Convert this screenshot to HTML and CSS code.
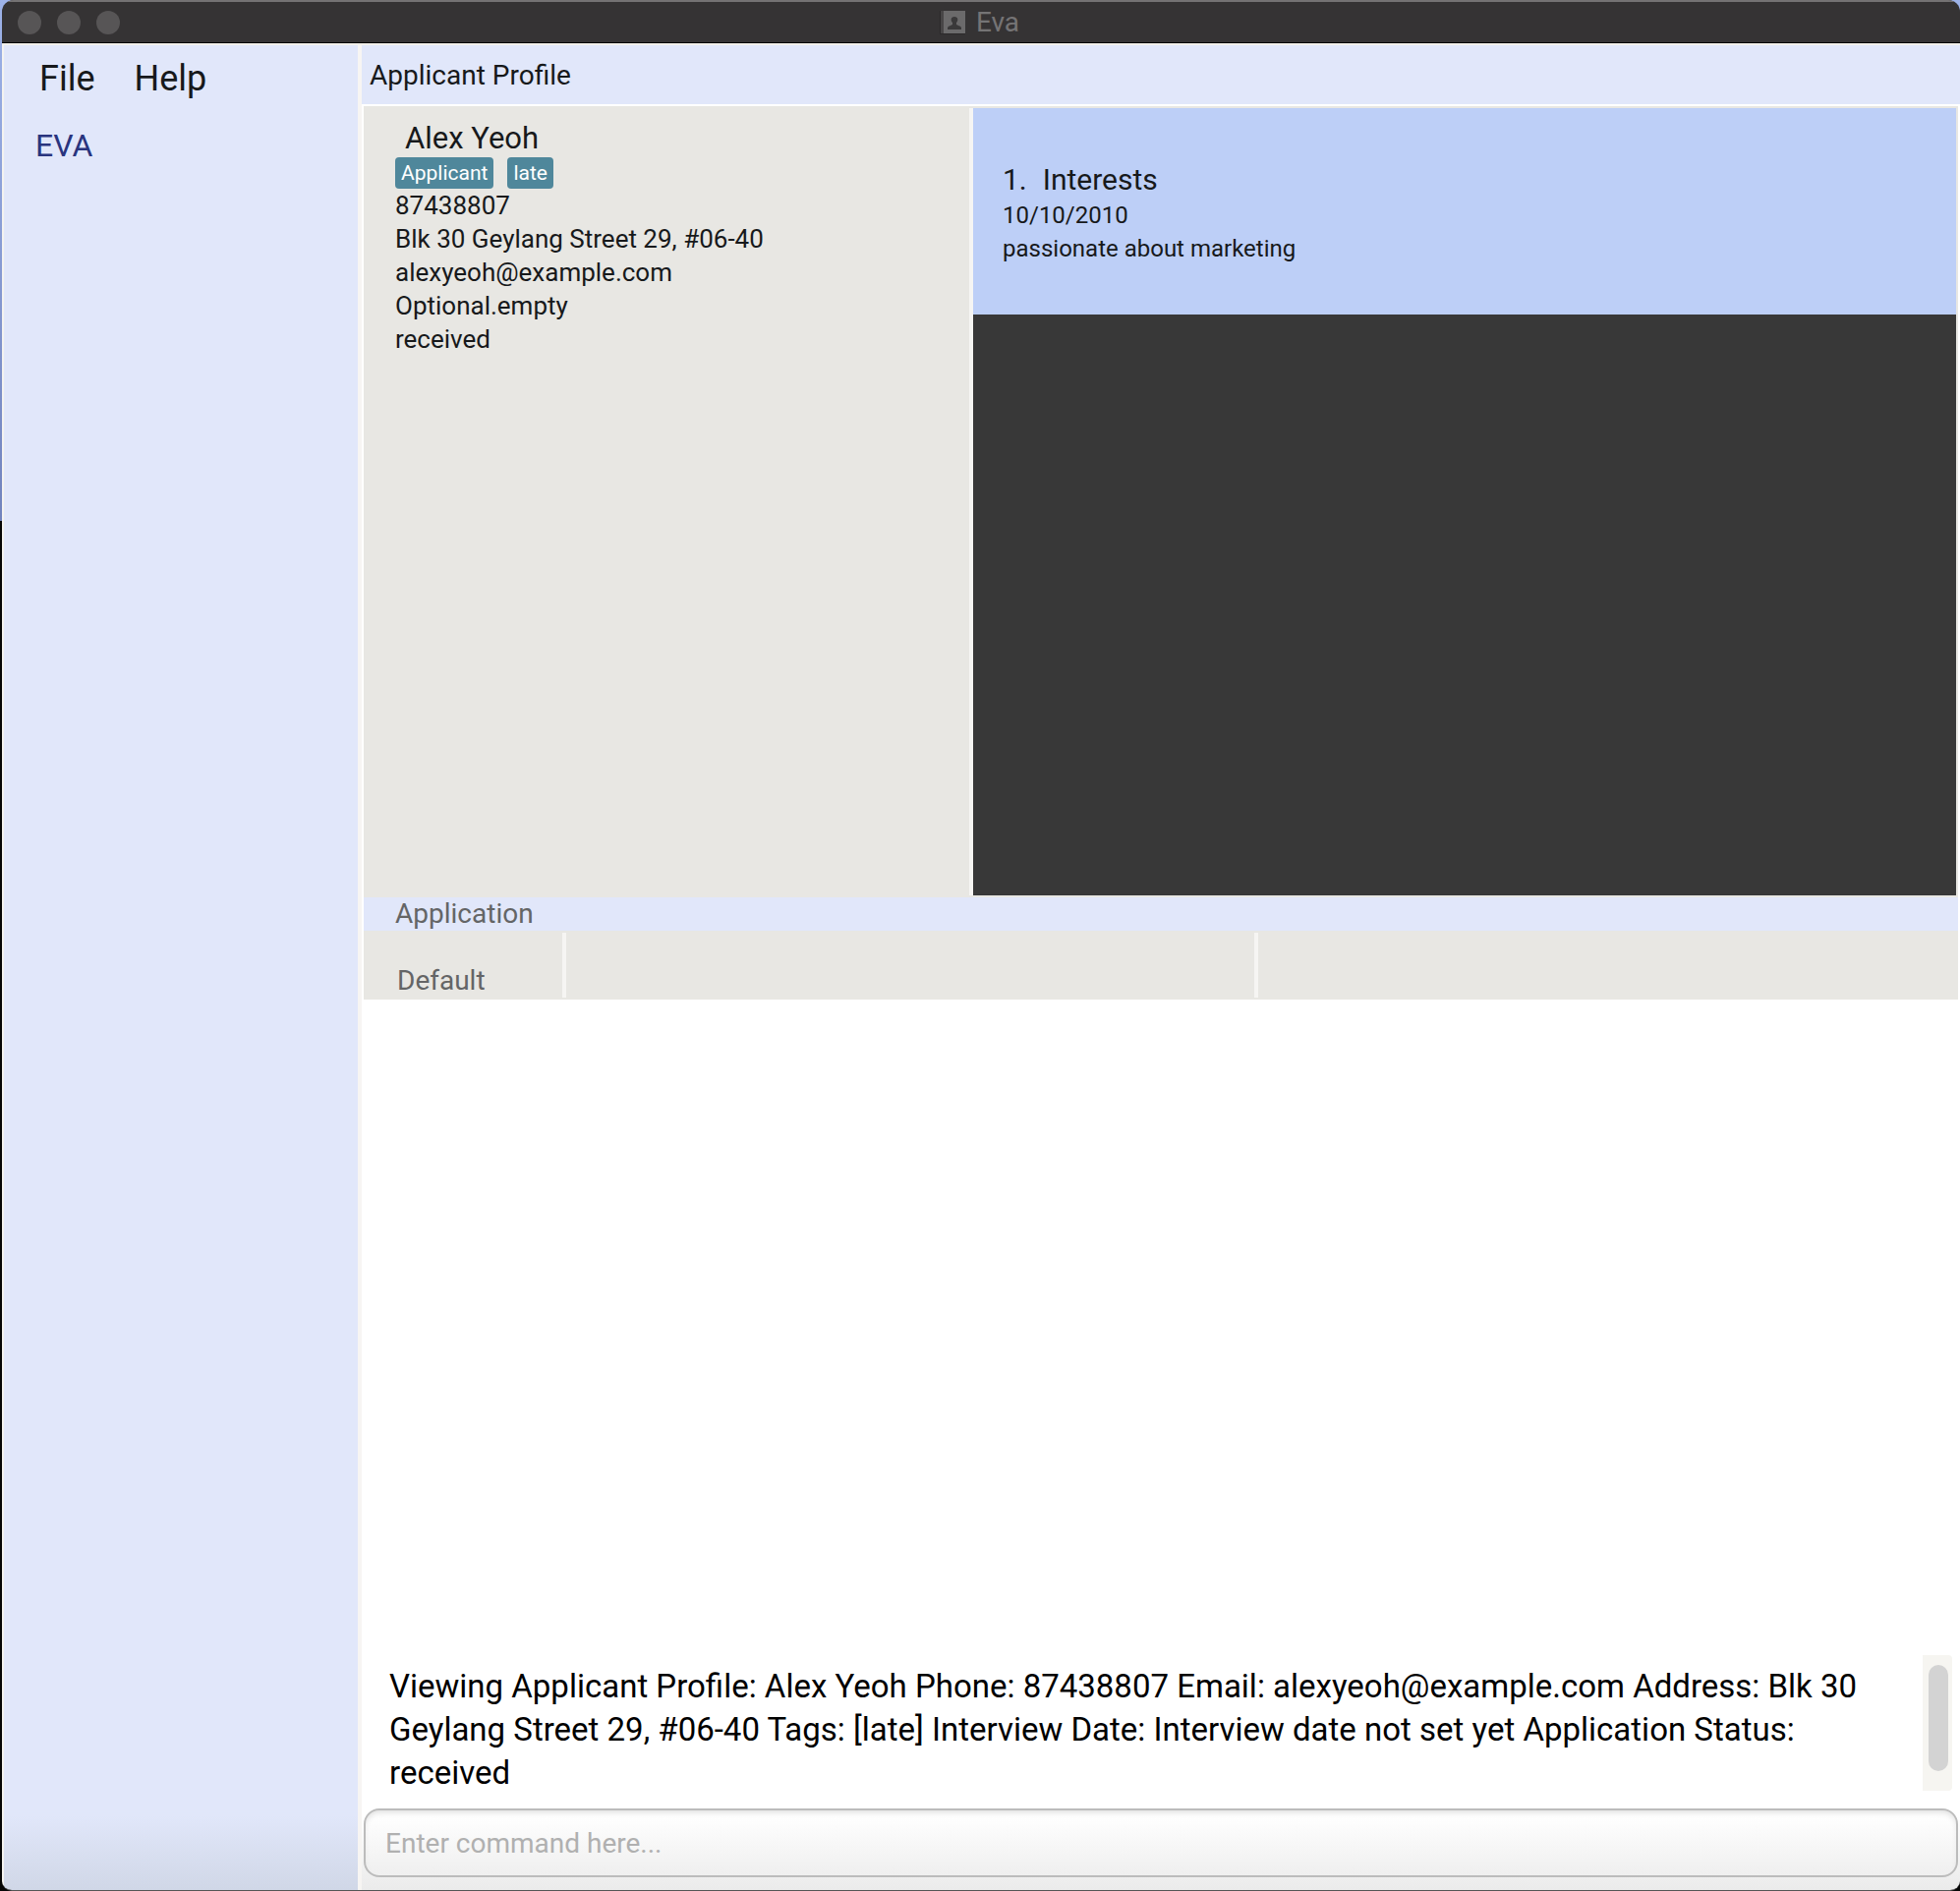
FILE: index.html
```html
<!DOCTYPE html>
<html lang="en">
<head>
<meta charset="utf-8">
<title>Eva</title>
<link rel="stylesheet" href="styles.css">
</head>
<body>
<div class="window">
  <header class="titlebar">
    <div class="lights"><span class="light"></span><span class="light"></span><span class="light"></span></div>
    <div class="window-title">
      <svg class="app-icon" width="28" height="26" viewBox="0 0 28 26" aria-hidden="true">
        <rect x="1" y="1" width="26" height="24" fill="#2b292a"/>
        <rect x="2" y="1" width="3" height="23" fill="#484647"/>
        <rect x="5" y="1" width="22" height="23" fill="#6b6a6b"/>
        <path d="M9 20v-2c1-2 4-2 5-3v-2c-2-2-2-6 2-6s4 4 2 6v2c1 1 4 1 5 3v2z" fill="#3a393a"/>
      </svg>
      <span>Eva</span>
    </div>
  </header>
  <div class="body">
    <aside class="sidebar">
      <nav class="menu">
        <button class="menu-item" type="button">File</button>
        <button class="menu-item" type="button">Help</button>
      </nav>
      <p class="brand">EVA</p>
    </aside>
    <main class="main">
      <h1 class="panel-title">Applicant Profile</h1>
      <div class="content">
        <section class="split">
          <div class="profile">
            <h2 class="name">Alex Yeoh</h2>
            <div class="tags"><span class="tag">Applicant</span><span class="tag">late</span></div>
            <p class="line">87438807</p>
            <p class="line">Blk 30 Geylang Street 29, #06-40</p>
            <p class="line">alexyeoh@example.com</p>
            <p class="line">Optional.empty</p>
            <p class="line">received</p>
          </div>
          <div class="comments">
            <article class="comment">
              <h3 class="comment-title"><span>1.</span><span>Interests</span></h3>
              <p class="line">10/10/2010</p>
              <p class="line">passionate about marketing</p>
            </article>
          </div>
        </section>
        <h2 class="application-title">Application</h2>
        <div class="application-row">
          <div class="cell cell-first">Default</div>
          <div class="cell"></div>
          <div class="cell"></div>
        </div>
        <div class="blank"></div>
        <div class="result">
          <textarea class="result-text" rows="3" readonly aria-label="Result">Viewing Applicant Profile: Alex Yeoh Phone: 87438807 Email: alexyeoh@example.com Address: Blk 30 Geylang Street 29, #06-40 Tags: [late] Interview Date: Interview date not set yet Application Status: received</textarea>
          <div class="scroll-track"><div class="scroll-thumb"></div></div>
        </div>
        <input class="command" type="text" placeholder="Enter command here..." aria-label="Command">
      </div>
    </main>
  </div>
</div>
</body>
</html>
```
FILE: styles.css
```css
* {
  box-sizing: border-box;
  margin: 0;
}

body {
  background: linear-gradient(#9db2e8 0, #7183bd 530px, #060606 530px, #060606 100%);
  color: #17191b;
  font-family: Roboto, "Liberation Sans", sans-serif;
  font-size: 26px;
  line-height: 34px;
}

h1, h2, h3 {
  font-weight: 400;
}

.window {
  display: flex;
  flex-direction: column;
  min-height: 100vh;
  margin-left: 2px;
  border-bottom: 1px solid #555;
  border-radius: 12px 12px 10px 10px;
  overflow: hidden;
}

.titlebar {
  display: grid;
  grid-template-columns: 1fr auto 1fr;
  align-items: center;
  height: 44px;
  padding: 0 16px;
  background: #353334;
  border-top: 2px solid #747273;
  border-bottom: 1px solid #000;
}

.lights {
  display: flex;
  gap: 16px;
}

.light {
  width: 24px;
  height: 24px;
  border-radius: 50%;
  background: #575556;
}

.window-title {
  display: flex;
  align-items: center;
  gap: 10px;
  padding-right: 4px;
  color: #757475;
  font-size: 28px;
}

.body {
  display: flex;
  flex: 1;
  border-top: 2px solid #f2f0ea;
}

.sidebar {
  width: 366px;
  flex: none;
  padding: 10px 32px;
  background: linear-gradient(#e1e7fa calc(100% - 76px), #d0d7e7 100%);
  border-left: 2px solid #f4f3f0;
  border-right: 4px solid #f7f5f3;
}

.menu {
  display: flex;
  gap: 40px;
  padding-left: 4px;
}

.menu-item {
  padding: 0;
  border: 0;
  background: none;
  color: inherit;
  font: inherit;
  font-size: 36px;
  line-height: 48px;
}

.brand {
  margin-top: 24px;
  color: #29347e;
  font-size: 32px;
  line-height: 40px;
}

.main {
  display: flex;
  flex: 1;
  flex-direction: column;
  min-width: 0;
  background: linear-gradient(#fff calc(100% - 76px), #ebebeb 100%);
}

.panel-title {
  height: 62px;
  padding: 0 8px;
  background: #e1e7fa;
  border-bottom: 2px solid #fff;
  font-size: 28px;
  line-height: 62px;
}

.content {
  display: flex;
  flex: 1;
  flex-direction: column;
  padding: 0 2px 13px;
}

.split {
  display: grid;
  grid-template-columns: 620fr 1000fr;
  flex: 802 0 0;
  padding: 2px 2px 2px 0;
  background: #e8e7e3;
}

.profile {
  padding: 12px 32px;
  border-right: 4px solid #f6f5f3;
}

.name {
  padding-left: 10px;
  font-size: 31px;
  line-height: 38px;
}

.tags {
  display: flex;
  gap: 14px;
}

.tag {
  padding: 0 6px;
  border-radius: 4px;
  background: #4f879b;
  color: #fff;
  font-size: 21px;
  line-height: 32px;
}

.comments {
  background: #383838;
}

.comment {
  height: 210px;
  padding: 54px 30px;
  background: #bdcff7;
  font-size: 24px;
}

.comment-title {
  display: flex;
  gap: 16px;
  font-size: 30px;
  line-height: 38px;
}

.application-title {
  padding: 0 32px;
  background: #e1e7fa;
  color: #646566;
  font-size: 28px;
  line-height: 34px;
}

.application-row {
  display: grid;
  grid-template-columns: 202px 704fr 716fr;
  height: 70px;
  padding: 2px 0;
  background: #e8e7e3;
  color: #646566;
  font-size: 28px;
}

.cell + .cell {
  border-left: 4px solid #f6f5f3;
}

.cell-first {
  padding: 32px 34px 0;
}

.blank {
  flex: 668 0 0;
}

.result {
  display: flex;
  justify-content: space-between;
  height: 138px;
  margin-bottom: 18px;
  padding-right: 6px;
}

.result-text {
  flex: 1;
  height: 138px;
  padding: 10px 26px 0;
  border: 0;
  outline: 0;
  background: none;
  color: #000;
  font: inherit;
  font-size: 33px;
  line-height: 44px;
  resize: none;
  overflow: hidden;
}

.scroll-track {
  width: 30px;
  padding: 10px 4px 20px 6px;
  border-radius: 0 4px 4px 0;
  background: #f6f5f1;
}

.scroll-thumb {
  height: 108px;
  border-radius: 10px;
  background: #d3d3d3;
}

.command {
  width: 100%;
  height: 70px;
  padding: 0 20px;
  border: 2px solid #bcbcbc;
  border-radius: 16px;
  outline: 0;
  background: transparent;
  box-shadow: inset 0 4px 6px -2px #ddd;
  color: #17191b;
  font: inherit;
  font-size: 28px;
}

.command::placeholder {
  color: #b0b0b0;
}
```
